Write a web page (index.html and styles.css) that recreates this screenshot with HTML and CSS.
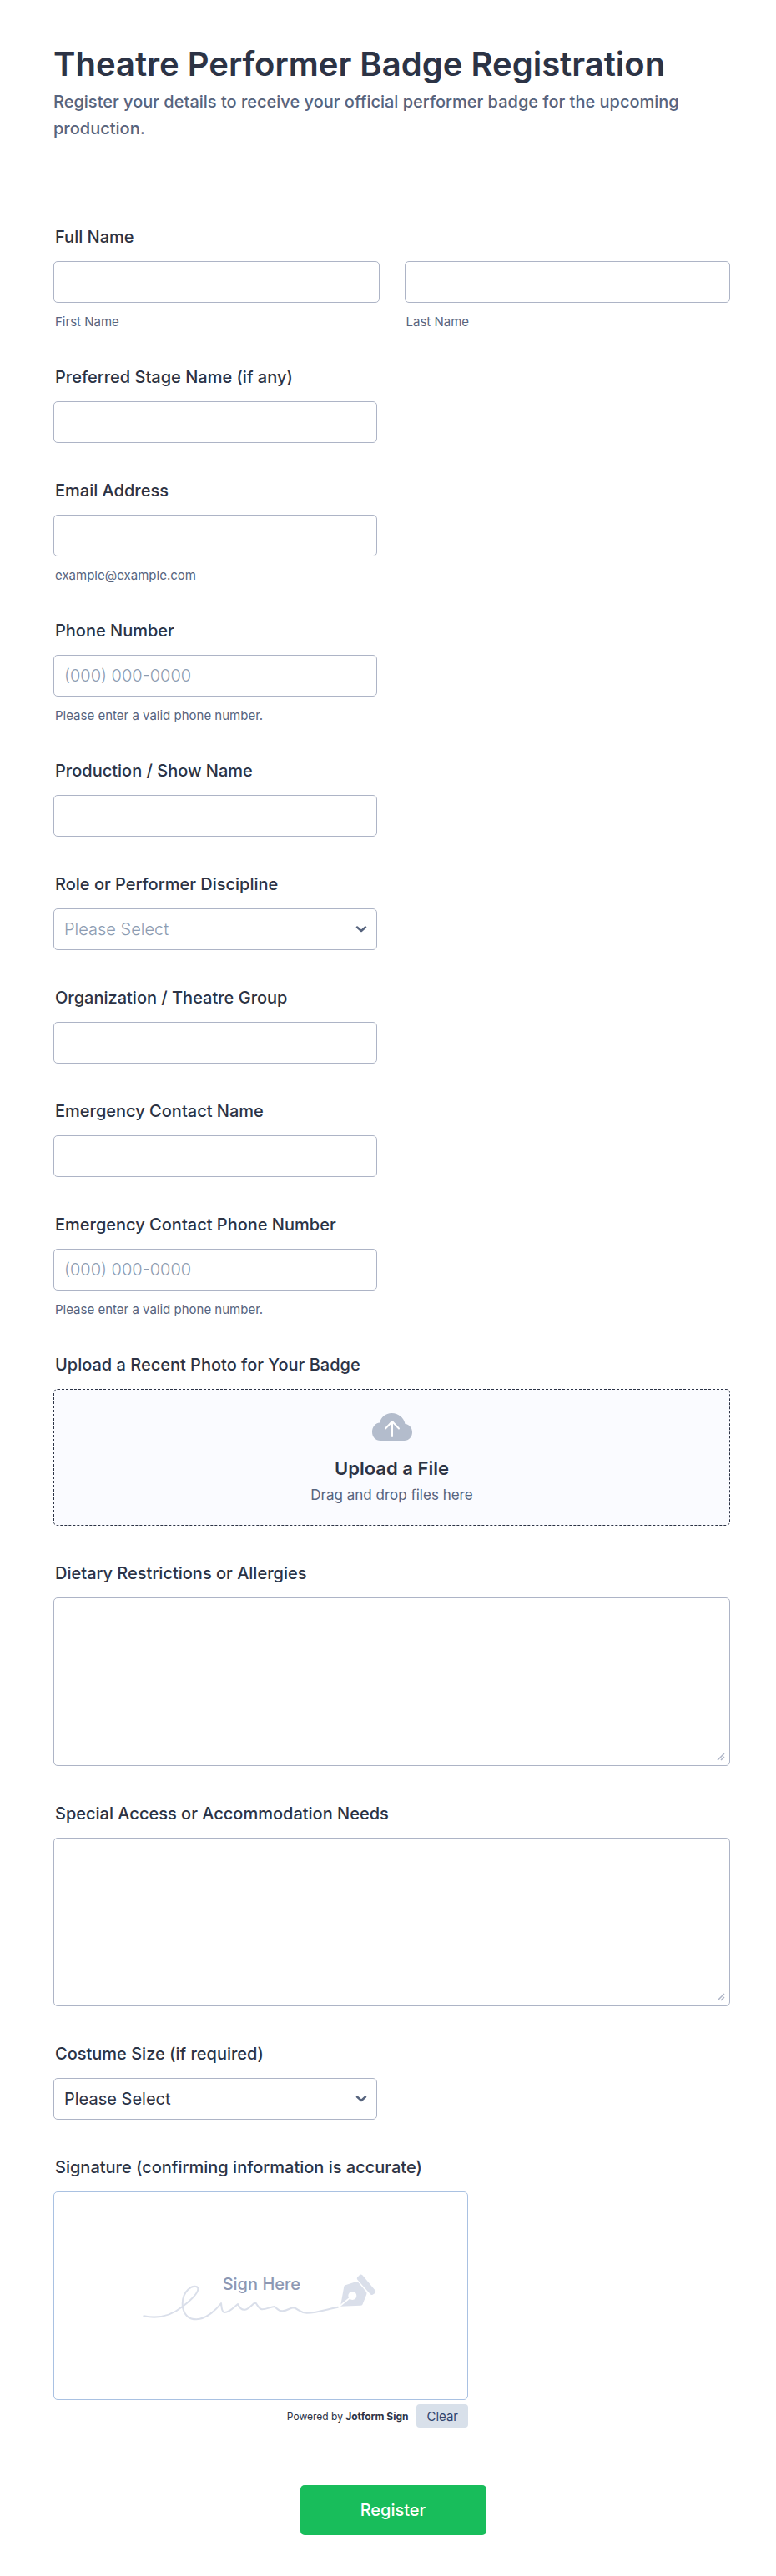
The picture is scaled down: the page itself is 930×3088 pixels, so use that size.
FILE: index.html
```html
<!DOCTYPE html>
<html lang="en">

<head>
    <meta charset="UTF-8">
    <meta name="viewport" content="width=device-width, initial-scale=1.0">
    <title>Theatre Performer Badge Registration</title>
    <link rel="stylesheet" href="styles.css">
</head>

<body>
    <form class="form" action="#" method="post">
        <header class="form-header">
            <h1>Theatre Performer Badge Registration</h1>
            <p>Register your details to receive your official performer badge for the upcoming production.</p>
        </header>

        <div class="form-body">
            <fieldset class="field">
                <legend class="label">Full Name</legend>
                <div class="name-row">
                    <div class="name-col">
                        <input class="input" type="text" id="first-name">
                        <label class="hint" for="first-name">First Name</label>
                    </div>
                    <div class="name-col">
                        <input class="input" type="text" id="last-name">
                        <label class="hint" for="last-name">Last Name</label>
                    </div>
                </div>
            </fieldset>

            <div class="field">
                <label class="label" for="stage-name">Preferred Stage Name (if any)</label>
                <input class="input half" type="text" id="stage-name">
            </div>

            <div class="field">
                <label class="label" for="email">Email Address</label>
                <input class="input half" type="email" id="email" aria-describedby="email-hint">
                <span class="hint" id="email-hint">example@example.com</span>
            </div>

            <div class="field">
                <label class="label" for="phone">Phone Number</label>
                <input class="input half" type="tel" id="phone" placeholder="(000) 000-0000" aria-describedby="phone-hint">
                <span class="hint" id="phone-hint">Please enter a valid phone number.</span>
            </div>

            <div class="field">
                <label class="label" for="production">Production / Show Name</label>
                <input class="input half" type="text" id="production">
            </div>

            <div class="field">
                <label class="label" for="role">Role or Performer Discipline</label>
                <div class="select-wrap half">
                    <select class="input select empty" id="role">
                        <option>Please Select</option>
                    </select>
                    <svg class="chevron" viewBox="0 0 14 8" aria-hidden="true">
                        <path d="M2 1.500 7 6 12 1.500" />
                    </svg>
                </div>
            </div>

            <div class="field">
                <label class="label" for="organization">Organization / Theatre Group</label>
                <input class="input half" type="text" id="organization">
            </div>

            <div class="field">
                <label class="label" for="contact-name">Emergency Contact Name</label>
                <input class="input half" type="text" id="contact-name">
            </div>

            <div class="field">
                <label class="label" for="contact-phone">Emergency Contact Phone Number</label>
                <input class="input half" type="tel" id="contact-phone" placeholder="(000) 000-0000" aria-describedby="contact-hint">
                <span class="hint" id="contact-hint">Please enter a valid phone number.</span>
            </div>

            <div class="field">
                <label class="label" for="photo">Upload a Recent Photo for Your Badge</label>
                <label class="dropzone" for="photo">
                    <input class="file-input" type="file" id="photo">
                    <svg class="cloud" viewBox="0 0 48 34" aria-hidden="true">
                        <path class="cloud-shape" d="M10 33C4 33 0 28.500 0 22.500c0-6 4-10.500 9-11C10.500 5 16 0 23.500 0 31.500 0 38 5.500 39.500 13c5 .5 8.500 4.500 8.500 10 0 5.500-4 10-9.500 10z" />
                        <path class="cloud-arrow" d="M24 28V10M16 18.500 24 10l8 8.500" />
                    </svg>
                    <span class="dropzone-title">Upload a File</span>
                    <span class="dropzone-text">Drag and drop files here</span>
                </label>
            </div>

            <div class="field">
                <label class="label" for="dietary">Dietary Restrictions or Allergies</label>
                <div class="textarea-wrap">
                    <textarea class="input textarea" id="dietary"></textarea>
                    <svg class="grip" viewBox="0 0 10 10" aria-hidden="true">
                        <path d="M1 9 9 1M5 9 9 5" />
                    </svg>
                </div>
            </div>

            <div class="field">
                <label class="label" for="access">Special Access or Accommodation Needs</label>
                <div class="textarea-wrap">
                    <textarea class="input textarea" id="access"></textarea>
                    <svg class="grip" viewBox="0 0 10 10" aria-hidden="true">
                        <path d="M1 9 9 1M5 9 9 5" />
                    </svg>
                </div>
            </div>

            <div class="field">
                <label class="label" for="costume">Costume Size (if required)</label>
                <div class="select-wrap half">
                    <select class="input select" id="costume">
                        <option>Please Select</option>
                    </select>
                    <svg class="chevron" viewBox="0 0 14 8" aria-hidden="true">
                        <path d="M2 1.500 7 6 12 1.500" />
                    </svg>
                </div>
            </div>

            <div class="field">
                <span class="label" id="sign-label">Signature (confirming information is accurate)</span>
                <div class="signature" role="group" aria-labelledby="sign-label">
                    <div class="sign-pad">
                        <svg class="sign-art" viewBox="38 66 900 180">
                            <path class="sign-line" d="M66 229C120 240 165 228 205 195C240 168 262 145 261 130C259 119 240 119 226 133C209 149 203 174 206 198C212 226 230 241 255 241C290 240 325 208 344 183C346 196 345 213 355 216C372 218 388 199 404 186C412 203 420 208 430 206C448 202 457 183 468 181C475 189 478 202 490 205C506 206 522 195 536 195C545 201 547 211 565 211C584 209 592 199 605 199C622 203 626 217 652 218C690 218 730 203 764 197" />
                            <path class="pen" d="M786 122Q787 119 791 118L828 106Q834 105 838 109L865 141Q869 146 867 151L852 188Q850 191 845 191L773 194Z" />
                            <circle class="pen-hole" cx="816" cy="156" r="15" />
                            <path class="pen-slit" d="M816 156 770 194" />
                            <path class="pen" d="M833 91 843 80Q848 78 852 82L899 138Q901 143 897 147L889 152Q884 155 880 150L834 98Q831 95 833 91Z" />
                            <text class="sign-text" x="349" y="135">Sign Here</text>
                        </svg>
                    </div>
                    <div class="sign-footer">
                        <span class="powered">Powered by <b>Jotform Sign</b></span>
                        <button class="clear-btn" type="button">Clear</button>
                    </div>
                </div>
            </div>
        </div>

        <div class="form-footer">
            <button class="submit-btn" type="submit">Register</button>
        </div>
    </form>
</body>

</html>
```
FILE: styles.css
```css
* {
    box-sizing: border-box;
}

body {
    margin: 0;
    font-family: Inter, sans-serif;
    font-size: 20px;
    background-color: #ffffff;
    color: #2c3345;
}

.form-header {
    padding: 52px 64px 50px;
    border-bottom: 1px solid #c5ccda;
}

.form-header h1 {
    margin: 0;
    font-size: 40px;
    line-height: 50px;
    font-weight: 600;
}

.form-header p {
    margin: 4px 0 0;
    line-height: 32px;
    font-weight: 500;
    color: #57647e;
}

.form-body {
    display: flex;
    flex-direction: column;
    gap: 44px;
    padding: 50px 55px 30px 64px;
}

.field {
    display: flex;
    flex-direction: column;
    margin: 0;
    padding: 0;
    border: none;
    min-width: 0;
}

.label {
    padding: 0 2px;
    margin-bottom: 16px;
    line-height: 26px;
    font-weight: 500;
}

.hint {
    margin-top: 14px;
    padding: 0 2px;
    font-size: 15px;
    line-height: 18px;
    color: #57647e;
}

.name-row {
    display: flex;
    gap: 30px;
}

.name-col {
    display: flex;
    flex-direction: column;
    flex: 1;
    min-width: 0;
}

.half {
    max-width: 388px;
}

.input {
    width: 100%;
    height: 50px;
    padding: 0 12px;
    border: 1px solid #adb4c6;
    border-radius: 5px;
    background-color: #ffffff;
    font-family: inherit;
    font-size: 20px;
    color: #2c3345;
}

.input::placeholder {
    color: #8d9cb2;
    font-weight: 300;
    opacity: 1;
}

.select-wrap,
.textarea-wrap {
    position: relative;
}

.select {
    display: block;
    appearance: none;
}

.select.empty {
    color: #8d9cb2;
    font-weight: 300;
}

.chevron {
    position: absolute;
    top: 21px;
    right: 12px;
    width: 14px;
    height: 8px;
    fill: none;
    stroke: #57647e;
    stroke-width: 2.5;
    stroke-linecap: round;
    stroke-linejoin: round;
    pointer-events: none;
}

.textarea {
    display: block;
    height: 202px;
    padding: 12px;
    resize: none;
}

.grip {
    position: absolute;
    right: 6px;
    bottom: 6px;
    width: 10px;
    height: 10px;
    fill: none;
    stroke: #adb4c6;
    stroke-width: 1.5;
    pointer-events: none;
}

.dropzone {
    display: flex;
    flex-direction: column;
    align-items: center;
    padding: 28px 16px 24px;
    border: 1px dashed #2c3345;
    border-radius: 5px;
    background-color: #fafbff;
    cursor: pointer;
}

.file-input {
    position: absolute;
    width: 1px;
    height: 1px;
    opacity: 0;
}

.cloud {
    width: 48px;
    height: 34px;
}

.cloud-shape {
    fill: #b3bccc;
}

.cloud-arrow {
    fill: none;
    stroke: #ffffff;
    stroke-width: 2;
    stroke-linecap: round;
    stroke-linejoin: round;
}

.dropzone-title {
    margin-top: 16px;
    font-size: 22px;
    line-height: 32px;
    font-weight: 600;
}

.dropzone-text {
    margin-top: 4px;
    font-size: 17px;
    line-height: 24px;
    color: #57647e;
}

.signature {
    max-width: 497px;
}

.sign-pad {
    display: flex;
    align-items: center;
    justify-content: center;
    height: 250px;
    border: 1px solid #a9c1e2;
    border-radius: 5px;
}

.sign-art {
    width: 300px;
    height: 60px;
}

.sign-line {
    fill: none;
    stroke: #dadfea;
    stroke-width: 6;
    stroke-linecap: round;
    stroke-linejoin: round;
}

.pen {
    fill: #dadfea;
}

.pen-hole {
    fill: #ffffff;
}

.pen-slit {
    stroke: #ffffff;
    stroke-width: 5;
}

.sign-text {
    font-size: 60px;
    font-weight: 500;
    fill: #8d98b3;
}

.sign-footer {
    display: flex;
    align-items: center;
    justify-content: flex-end;
    gap: 10px;
    margin-top: 5px;
}

.powered {
    font-size: 12px;
}

.powered b {
    font-weight: 700;
}

.clear-btn {
    height: 28px;
    padding: 0 12px;
    border: none;
    border-radius: 4px;
    background-color: #d8e0ea;
    font-family: inherit;
    font-size: 15px;
    color: #31456f;
    cursor: pointer;
}

.form-footer {
    display: flex;
    justify-content: center;
    padding: 38px 52px 48px 64px;
    border-top: 1px solid #dde3ec;
}

.submit-btn {
    min-width: 223px;
    height: 60px;
    border: none;
    border-radius: 5px;
    background-color: #18bd5b;
    font-family: inherit;
    font-size: 20px;
    font-weight: 500;
    color: #ffffff;
    cursor: pointer;
}
```
